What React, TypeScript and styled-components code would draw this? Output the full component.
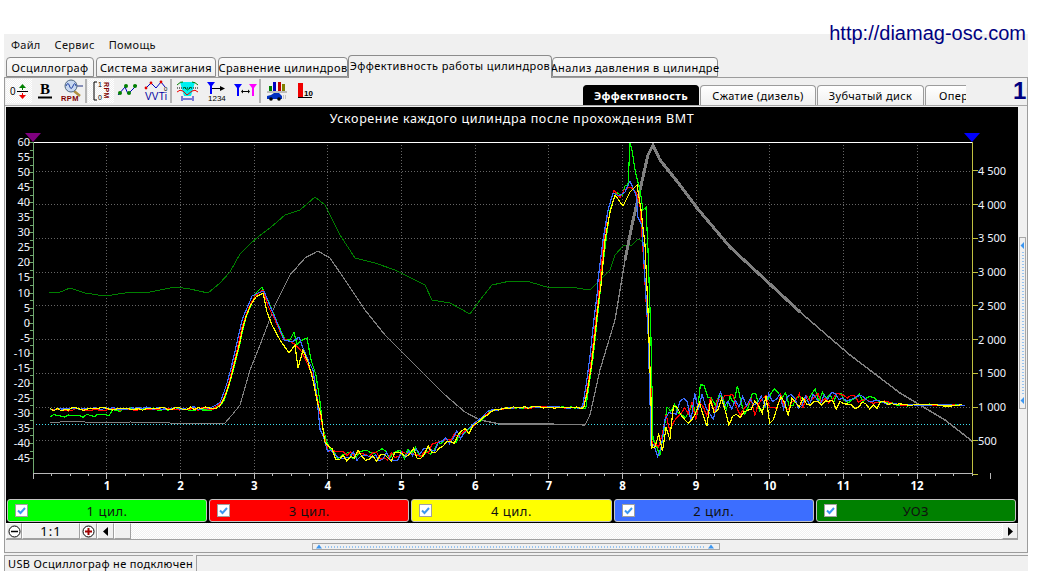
import styled, { createGlobalStyle } from "styled-components";

const GlobalStyle = createGlobalStyle`
  html, body {
    margin: 0;
    height: 576px;
    overflow: hidden;
    background: #fff;
    font-family: "Noto Sans", "Open Sans", sans-serif;
    font-size: 11px;
    color: #000;
  }
`;

const TopStrip = styled.div`
  height: 34px;
  width: 1026px;
  display: flex;
  justify-content: flex-end;
  align-items: flex-end;
`;

const SiteLink = styled.div`
  position: relative;
  z-index: 1;
  font-family: "Liberation Sans", sans-serif;
  font-size: 20px;
  line-height: 22px;
  margin-bottom: -10px;
  color: #000080;
`;

const AppWindow = styled.div`
  margin-left: 4px;
  width: 1024px;
  height: 537px;
  background: #f0f0f0;
  display: flex;
  flex-direction: column;
`;

const MenuBar = styled.div`
  height: 21px;
  display: flex;
  align-items: center;
  gap: 14px;
  padding-left: 7px;
  color: #111;
  letter-spacing: 0.3px;
`;

const TabRow = styled.div`
  height: 22px;
  display: flex;
  align-items: flex-end;
  padding-left: 2px;
  gap: 2px;
`;

const Tab = styled.div<{ $w: number; $active?: boolean }>`
  width: ${(p) => p.$w}px;
  height: ${(p) => (p.$active ? 23 : 20)}px;
  box-sizing: border-box;
  margin: ${(p) => (p.$active ? "0 -2px -1px" : "0")};
  position: relative;
  z-index: ${(p) => (p.$active ? 1 : 0)};
  border: 1px solid #8c8c8c;
  border-bottom: ${(p) => (p.$active ? "none" : "1px solid #8c8c8c")};
  border-radius: 4px 4px 0 0;
  background: ${(p) => (p.$active ? "#f0f0f0" : "linear-gradient(#fafafa, #f0f0f0)")};
  display: flex;
  align-items: center;
  justify-content: center;
  letter-spacing: 0.42px;
  white-space: nowrap;
  padding-bottom: ${(p) => (p.$active ? 3 : 0)}px;
`;

const Panel = styled.div`
  height: 476px;
  box-sizing: border-box;
  border: 1px solid #9c9c9c;
  display: flex;
  flex-direction: column;
`;

const Toolbar = styled.div`
  height: 28px;
  box-sizing: border-box;
  border-bottom: 1px solid #a8a8a8;
  display: flex;
  align-items: stretch;
  padding-left: 1px;
`;

const ToolGroup = styled.div<{ $w: number; $last?: boolean }>`
  width: ${(p) => p.$w}px;
  box-sizing: border-box;
  margin: 1px 0 2px;
  border-right: ${(p) => (p.$last ? "none" : "2px solid #b4b4b4")};
  display: flex;
  justify-content: space-around;
`;

const ToolButton = styled.div<{ $pressed?: boolean }>`
  width: 26px;
  display: flex;
  align-items: center;
  justify-content: center;
  background: ${(p) =>
    p.$pressed ? "repeating-conic-gradient(#fff 0 25%, #f0f0f0 0 50%) 0 0 / 2px 2px" : "none"};
`;

const SubTabs = styled.div`
  margin-left: auto;
  width: 383px;
  overflow: hidden;
  display: flex;
  align-items: flex-end;
  gap: 1px;
`;

const SubTab = styled.div<{ $w: number; $active?: boolean }>`
  flex: none;
  width: ${(p) => p.$w}px;
  height: 20px;
  box-sizing: border-box;
  border: 1px solid ${(p) => (p.$active ? "#000" : "#9c9c9c")};
  border-bottom: none;
  border-radius: 4px 4px 0 0;
  background: ${(p) => (p.$active ? "#000" : "linear-gradient(#fff, #f0f0f0)")};
  color: ${(p) => (p.$active ? "#fff" : "#000")};
  font-weight: ${(p) => (p.$active ? 700 : 400)};
  display: flex;
  align-items: center;
  justify-content: ${(p) => (p.$w < 100 && !p.$active ? "flex-start" : "center")};
  padding-left: ${(p) => (p.$w < 100 ? 13 : 0)}px;
  letter-spacing: 0.35px;
  white-space: nowrap;
`;

const BigNumber = styled.div`
  margin-left: 47px;
  width: 14px;
  overflow: hidden;
  font-family: "Liberation Sans", sans-serif;
  font-weight: 700;
  font-size: 24px;
  line-height: 26px;
  color: #000080;
`;

const ChartRow = styled.div`
  height: 434px;
  display: flex;
`;

const ChartColumn = styled.div`
  width: 1013px;
  padding-top: 1px;
  box-sizing: border-box;
  display: flex;
  flex-direction: column;
`;

const Scope = styled.div`
  margin-left: 1px;
  height: 416px;
  background: #000;
  display: flex;
  flex-direction: column;
`;

const ChartSvg = styled.svg`
  display: block;
  flex: none;
  font-family: "Noto Sans", sans-serif;
`;

const Legend = styled.div`
  width: 1009px;
  margin: 1px 0 0 1px;
  display: grid;
  grid-template-columns: repeat(5, 1fr);
  gap: 2px;
`;

const LegendButton = styled.div<{ $color: string }>`
  height: 23px;
  box-sizing: border-box;
  border: 1px solid #c4c4c4;
  border-radius: 3px;
  background: ${(p) => p.$color};
  display: flex;
  align-items: center;
  justify-content: center;
  position: relative;
  font-size: 13px;
  letter-spacing: 0.5px;
  color: #111;
`;

const CheckBox = styled.span`
  position: absolute;
  left: 7px;
  top: 4px;
  width: 13px;
  height: 13px;
  box-sizing: border-box;
  background: #fff;
  border: 1px solid #a0a0a0;
  display: flex;
  align-items: center;
  justify-content: center;
`;

const ScrollRow = styled.div`
  height: 17px;
  box-sizing: border-box;
  margin-left: 1px;
  border-bottom: 1px solid #a0a0a0;
  display: flex;
  background: repeating-conic-gradient(#fff 0 25%, #f0f0f0 0 50%) 0 0 / 2px 2px;
`;

const RaisedButton = styled.div<{ $w: number }>`
  flex: none;
  width: ${(p) => p.$w}px;
  box-sizing: border-box;
  background: #f0f0f0;
  border: 1px solid;
  border-color: #fff #a0a0a0 #a0a0a0 #fff;
  display: flex;
  align-items: center;
  justify-content: center;
  font-size: 13px;
  letter-spacing: 1px;
`;

const ScrollGap = styled.div`
  flex: 1;
`;

const VSplitter = styled.div`
  flex: 1;
  display: flex;
  align-items: center;
  padding-left: 1px;
`;

const VGrip = styled.div`
  width: 7px;
  height: 172px;
  border: 1px solid #a8a8a8;
  box-sizing: border-box;
`;

const HSplitter = styled.div`
  height: 12px;
  display: flex;
  align-items: center;
  justify-content: center;
`;

const HGrip = styled.div`
  width: 408px;
  height: 7px;
  border: 1px solid #a8a8a8;
  box-sizing: border-box;
`;

const StatusBar = styled.div`
  flex: 1;
  padding-top: 2px;
  display: flex;
  gap: 3px;
`;

const StatusCell = styled.div<{ $w?: number }>`
  ${(p) => (p.$w ? `width: ${p.$w}px;` : "flex: 1;")}
  box-sizing: border-box;
  border-top: 1px solid #a0a0a0;
  border-left: 1px solid #a0a0a0;
  padding-left: 3px;
  display: flex;
  align-items: center;
  letter-spacing: 0.35px;
`;

const toX = (t: number) => 33.3 + t * 73.65;

type Pt = [number, number];

const interp = (pts: Pt[], x: number) => {
  for (let i = 1; i < pts.length; i++) {
    if (x <= pts[i][0]) {
      const [x0, y0] = pts[i - 1];
      const [x1, y1] = pts[i];
      return y0 + ((y1 - y0) * (x - x0)) / (x1 - x0);
    }
  }
  return pts[pts.length - 1][1];
};

const basePts: Pt[] = [
  [50, 409], [215, 408], [222, 402], [228, 385], [237, 350], [243, 322], [250, 304], [255, 296],
  [318, 402], [322, 430], [327, 447], [337, 456], [400, 456], [420, 453], [440, 445], [465, 432],
  [480, 420], [490, 411], [510, 408], [540, 407], [584, 408], [590, 370], [600, 280],
  [652, 445], [658, 447], [664, 428], [672, 416], [690, 408], [760, 405], [800, 401], [850, 397],
  [880, 402], [900, 405], [965, 405],
];

const noiseAmp = (x: number) => {
  if (x < 215) return 1.6;
  if (x < 320) return 0.8;
  if (x < 470) return 5.5;
  if (x < 585) return 1;
  if (x < 655) return 2;
  if (x < 720) return 17;
  if (x < 830) return 17 - ((x - 720) / 110) * 10;
  if (x < 890) return 7 - ((x - 830) / 60) * 5;
  return 1;
};

const makeRand = (seed: number) => () => {
  seed = (seed * 16807) % 2147483647;
  return (seed % 10000) / 5000 - 1;
};

type Series = {
  color: string;
  seed: number;
  shift: number;
  bias: (x: number) => number;
  gain: number;
  peakA: Pt[];
  peakB: Pt[];
};

const seriesList: Series[] = [
  {
    color: "#00ff00",
    seed: 4711,
    shift: 1.5,
    gain: 1,
    bias: (x) => (x < 110 ? 7 : x < 215 ? 1 : x > 655 && x < 830 ? -6 : x > 340 && x < 420 ? -2 : 0),
    peakA: [[256, 293], [262, 287], [270, 305], [277, 322], [285, 340], [290, 340], [294, 332], [297, 345], [300, 341], [307, 338], [311, 360], [316, 375], [320, 402]],
    peakB: [[601, 280], [606, 240], [610, 210], [616, 192], [622, 196], [625, 186], [628, 185], [630, 143], [632, 150], [635, 170], [640, 190], [643, 210], [646, 207], [648, 250], [651, 340], [653, 440]],
  },
  {
    color: "#ff0000",
    seed: 9182,
    shift: 0.3,
    gain: 0.8,
    bias: (x) => (x < 215 ? 1 : 0),
    peakA: [[255, 296], [263, 290], [268, 306], [275, 320], [283, 338], [291, 342], [296, 345], [302, 352], [308, 365], [314, 378], [318, 402]],
    peakB: [[600, 280], [604, 240], [608, 210], [614, 190], [620, 198], [624, 190], [630, 187], [636, 192], [640, 205], [643, 250], [646, 300], [649, 345], [651, 390], [652, 446]],
  },
  {
    color: "#3c6eff",
    seed: 2203,
    shift: -1.5,
    gain: 0.9,
    bias: () => 0,
    peakA: [[252, 296], [258, 293], [264, 291], [270, 306], [276, 320], [284, 340], [292, 342], [299, 337], [303, 348], [309, 362], [313, 370], [317, 398]],
    peakB: [[598, 280], [603, 240], [608, 210], [613, 193], [619, 196], [625, 192], [630, 181], [636, 195], [638, 218], [642, 225], [645, 280], [648, 330], [650, 400], [651, 445]],
  },
  {
    color: "#ffff00",
    seed: 7741,
    shift: 1,
    gain: 1.1,
    bias: (x) => (x > 655 && x < 880 ? 6 : 0),
    peakA: [[256, 297], [263, 293], [267, 312], [272, 325], [280, 340], [289, 353], [295, 345], [298, 368], [303, 350], [308, 362], [313, 380], [318, 405]],
    peakB: [[601, 285], [605, 240], [610, 212], [615, 195], [623, 206], [630, 192], [637, 185], [641, 210], [645, 245], [648, 310], [651, 400], [652, 448]],
  },
];

const buildLine = (s: Series) => {
  const rand = makeRand(s.seed);
  const out: Pt[] = [];
  const run = (from: number, to: number) => {
    for (let x = from; x < to; x += 3.7) {
      const y = interp(basePts, x - s.shift) + s.bias(x) + rand() * noiseAmp(x) * s.gain;
      out.push([x, Math.min(y, 472)]);
    }
  };
  run(50, s.peakA[0][0]);
  out.push(...s.peakA);
  run(s.peakA[s.peakA.length - 1][0] + 3, s.peakB[0][0]);
  out.push(...s.peakB);
  run(s.peakB[s.peakB.length - 1][0] + 3, 965);
  return out.map((p) => p.join(",")).join(" ");
};

const timingLine =
  "49,292 58,293 70,288 85,293 105,296 125,293 150,292 175,287 190,289 208,293 220,283 230,272 240,254 250,244 258,237 270,228 285,215 300,210 315,197 325,205 340,235 355,258 375,263 395,270 425,285 432,300 450,303 470,314 480,300 492,285 510,281 530,282 550,288 570,287 590,290 600,280 610,270 615,255 623,246 632,245 638,239 645,243 648,245";
const rpmThin =
  "50,423 70,421 100,423 130,422 170,423 225,423 232,415 240,405 250,370 262,340 275,305";
const rpmMid =
  "275,305 290,275 305,258 318,251 330,258 345,280 365,310 385,335 405,355 425,375 445,395 465,412 480,420 500,424 550,424 585,425 590,415 600,370 615,320 625,260";
const rpmThick = "625,260 632,225 640,190 648,155 653,145 660,160 680,185 697,208 730,247 800,312";
const rpmTail = "800,312 850,355 900,393 945,420 972,441";

const leftLabels = Array.from({ length: 22 }, (_, i) => 60 - i * 5);
const rightLabels = ["4 500", "4 000", "3 500", "3 000", "2 500", "2 000", "1 500", "1 000", "500"];
const rightY = (i: number) => 171 + i * 33.72;

const Chart = () => (
  <ChartSvg width={1012} height={391} viewBox="6 107 1012 391">
    <text x={512} y={123} fill="#fff" fontSize={12.5} textAnchor="middle" letterSpacing={0.62}>
      Ускорение каждого цилиндра после прохождения ВМТ
    </text>
    {rightLabels.map((_, i) => (
      <line key={i} x1={33} x2={972} y1={rightY(i)} y2={rightY(i)} stroke="#666" strokeDasharray="1 2" shapeRendering="crispEdges" />
    ))}
    {Array.from({ length: 12 }, (_, i) => (
      <line key={i} x1={toX(i + 1)} x2={toX(i + 1)} y1={142} y2={473} stroke="#666" strokeDasharray="1 2" shapeRendering="crispEdges" />
    ))}
    <line x1={33} x2={972} y1={424} y2={424} stroke="#40e0f0" strokeDasharray="1 2" shapeRendering="crispEdges" />

    <polyline points={timingLine} fill="none" stroke="#008000" shapeRendering="crispEdges" />
    <polyline points={rpmThin} fill="none" stroke="#808080" shapeRendering="crispEdges" />
    <polyline points={rpmMid} fill="none" stroke="#808080" strokeWidth={1.2} shapeRendering="crispEdges" />
    <polyline points={rpmThick} fill="none" stroke="#808080" strokeWidth={3} shapeRendering="crispEdges" />
    <polyline points={rpmTail} fill="none" stroke="#808080" strokeWidth={1.5} shapeRendering="crispEdges" />
    {seriesList.map((s) => (
      <polyline key={s.color} points={buildLine(s)} fill="none" stroke={s.color} strokeWidth={1.2} shapeRendering="crispEdges" />
    ))}

    <line x1={33} x2={972} y1={142.5} y2={142.5} stroke="#fff" />
    <line x1={33.5} x2={33.5} y1={142} y2={473} stroke="#6fa86f" />
    <line x1={33} x2={972} y1={473.5} y2={473.5} stroke="#b8b8b8" />
    <line x1={972.5} x2={972.5} y1={142} y2={474} stroke="#c0c040" />

    {Array.from({ length: 43 }, (_, i) => (
      <line key={i} x1={i % 2 ? 30 : 28} x2={33} y1={142.5 + i * 7.525} y2={142.5 + i * 7.525} stroke="#6fa86f" shapeRendering="crispEdges" />
    ))}
    {Array.from({ length: 53 }, (_, i) => (
      <line key={i} x1={toX(i / 4)} x2={toX(i / 4)} y1={473} y2={i % 4 === 0 ? 479 : 476} stroke="#b8b8b8" shapeRendering="crispEdges" />
    ))}
    {Array.from({ length: 19 }, (_, i) => (
      <line key={i} x1={973} x2={i % 2 ? 976 : 978} y1={154.1 + i * 16.86 + (i % 2 ? 0 : 16.86)} y2={154.1 + i * 16.86 + (i % 2 ? 0 : 16.86)} stroke="#c0c040" shapeRendering="crispEdges" />
    ))}

    {leftLabels.map((v, i) => (
      <text key={v} x={30} y={146 + i * 15.05} fill="#f0f4ff" fontSize={11} textAnchor="end">
        {v}
      </text>
    ))}
    {rightLabels.map((v, i) => (
      <text key={v} x={978} y={rightY(i) + 4} fill="#f0f4ff" fontSize={11}>
        {v}
      </text>
    ))}
    {Array.from({ length: 12 }, (_, i) => (
      <text key={i} x={toX(i + 1)} y={490} fill="#fff" fontSize={11.5} fontWeight={700} textAnchor="middle">
        {i + 1}
      </text>
    ))}
    <polygon points="25,133 41,133 33,142" fill="#800080" />
    <polygon points="964,133 980,133 972,142" fill="#0000ff" />
  </ChartSvg>
);

const legendItems = [
  { label: "1 цил.", color: "#00ff00" },
  { label: "3 цил.", color: "#ff0000" },
  { label: "4 цил.", color: "#ffff00" },
  { label: "2 цил.", color: "#3c6eff" },
  { label: "УОЗ", color: "#008000" },
];

const CheckMark = () => (
  <svg width={11} height={11} viewBox="0 0 11 11">
    <path d="M2 5.5 L4.5 8 L9 3" fill="none" stroke="#3c96f0" strokeWidth={2} />
  </svg>
);

const Icon = ({ children }: { children: React.ReactNode }) => (
  <svg width={24} height={24} viewBox="0 0 24 24" fontFamily="Liberation Sans, sans-serif">
    {children}
  </svg>
);

const SmallT = ({ x, y, color }: { x: number; y: number; color: string }) => (
  <path d={`M${x - 4} ${y} H${x + 4} L${x + 1} ${y + 4} V${y + 12} H${x - 1} V${y + 4} Z`} fill={color} />
);

const ArrowsIcon = () => (
  <Icon>
    <text x={3} y={16} fontSize={10} fill="#000">0</text>
    <path d="M10 12.5H21" stroke="#000" />
    <path d="M15.5 5 L12 9 H19 Z M15 9h1v2h-1z" fill="#008000" />
    <path d="M15.5 20 L12 16 H19 Z M15 14h1v2h-1z" fill="#f00000" />
  </Icon>
);

const BoldIcon = () => (
  <Icon>
    <text x={12} y={15} fontSize={15} fontWeight={700} fontFamily="Liberation Serif, serif" textAnchor="middle">B</text>
    <path d="M5 18.5H19" stroke="#000" strokeWidth={2} />
  </Icon>
);

const RpmIcon = () => (
  <Icon>
    <path d="M14 12L20 17" stroke="#b09040" strokeWidth={2.5} />
    <path d="M16 7H23" stroke="#203080" />
    <circle cx={11} cy={7} r={6} fill="#c8d8f0" stroke="#506880" />
    <path d="M6 7 Q8 2 9.5 7 T13 7 T16 7" fill="none" stroke="#2040a0" />
    <text x={1} y={22} fontSize={7.5} fontWeight={700} fill="#800000" letterSpacing={0.4}>RPM</text>
  </Icon>
);

const ScaleIcon = () => (
  <Icon>
    <path d="M8 3H5V21H8" fill="none" stroke="#000" />
    <text x={9} y={8} fontSize={7} fill="#000">1</text>
    <text x={9} y={21} fontSize={7} fill="#000">0</text>
    <text transform="translate(15 3) rotate(90)" fontSize={7} fontWeight={700} fill="#800000" letterSpacing={0.4}>RPM</text>
  </Icon>
);

const LinkIcon = () => (
  <Icon>
    <path d="M2 16L9 8M12 15L19 8" stroke="#0000c0" />
    <path d="M9 8L12 15" stroke="#0000c0" />
    <path d="M19 8L21 6" stroke="#0000c0" />
    <circle cx={4} cy={14} r={2} fill="#008000" />
    <circle cx={10} cy={7} r={2} fill="#008000" />
    <circle cx={13} cy={14} r={2} fill="#008000" />
    <circle cx={19} cy={7} r={2} fill="#008000" />
  </Icon>
);

const VvtIcon = () => (
  <Icon>
    <path d="M2 9L7 4L12 9L17 3L21 8" fill="none" stroke="#0000c0" />
    <circle cx={2} cy={9} r={1.4} fill="#e00000" />
    <circle cx={7} cy={4} r={1.4} fill="#e00000" />
    <circle cx={17} cy={3} r={1.4} fill="#e00000" />
    <text x={20} y={12} fontSize={6} fill="#000">0</text>
    <text x={1} y={21} fontSize={10} fill="#0000a0" letterSpacing={0.2}>VVTi</text>
  </Icon>
);

const WindowIcon = () => (
  <Icon>
    <path d="M5 3H20L16 17H9Z" fill="#00f0f0" />
    <path d="M2 6Q6 2 8 3M17 3Q20 3 23 6" fill="none" stroke="#008000" />
    <path d="M9 8L12.5 11L16 8" fill="none" stroke="#008000" />
    <path d="M2 9H23" stroke="#000" strokeDasharray="1 1" />
    <path d="M2 13Q5 10 8 12L12 16L17 12Q20 10 23 13" fill="none" stroke="#f00000" />
    <path d="M7 17V22M18 17V22M8 20H17" stroke="#0000c0" />
  </Icon>
);

const OrderIcon = () => (
  <Icon>
    <SmallT x={7} y={3} color="#0000ff" />
    <path d="M8 9.5H20" stroke="#000" />
    <path d="M16 7L21 9.5L16 12Z" fill="#000" />
    <text x={4} y={22} fontSize={8} fill="#000">1234</text>
  </Icon>
);

const MarkersIcon = () => (
  <Icon>
    <SmallT x={5} y={5} color="#0000ff" />
    <SmallT x={20} y={5} color="#ff00ff" />
    <path d="M9 12.5H16" stroke="#000" />
    <path d="M10 10.5L8 12.5L10 14.5ZM15 10.5L17 12.5L15 14.5Z" fill="#000" />
  </Icon>
);

const CarIcon = () => (
  <Icon>
    <rect x={5} y={7} width={3} height={5} fill="#008000" />
    <rect x={9} y={3} width={3} height={9} fill="#0000c0" />
    <rect x={14} y={3} width={3} height={9} fill="#c00000" />
    <rect x={18} y={5} width={3} height={7} fill="#808000" />
    <path d="M3 13H23" stroke="#888" />
    <path d="M3 20V17L7 16L10 14H15L18 17V20Z" fill="#0030c0" />
    <circle cx={7} cy={20} r={1.8} fill="#000" />
    <circle cx={15} cy={20} r={1.8} fill="#000" />
    <path d="M19 17H23M19 19H23" stroke="#999" strokeDasharray="1 1" />
  </Icon>
);

const RedBarIcon = () => (
  <Icon>
    <rect x={5} y={4} width={5} height={14} fill="#f00000" />
    <path d="M5 18.5H19" stroke="#000" />
    <text x={11} y={17} fontSize={8} fontWeight={700} fill="#000">10</text>
    <path d="M10 10H19" stroke="#000" strokeDasharray="9 0" strokeOpacity={0} />
  </Icon>
);

const ZoomMinus = () => (
  <svg width={13} height={13} viewBox="0 0 13 13">
    <circle cx={6.5} cy={6.5} r={5.5} fill="#fff" stroke="#000" />
    <path d="M3 6.5H10" stroke="#000" strokeWidth={1.5} />
  </svg>
);

const ZoomPlus = () => (
  <svg width={13} height={13} viewBox="0 0 13 13">
    <circle cx={6.5} cy={6.5} r={5.5} fill="#fff" stroke="#000" />
    <path d="M3 6.5H10M6.5 3V10" stroke="#a00000" strokeWidth={2} />
  </svg>
);

const ArrowLeft = () => (
  <svg width={5} height={9} viewBox="0 0 5 9">
    <path d="M5 0V9L0 4.5Z" fill="#000" />
  </svg>
);

const ArrowRight = () => (
  <svg width={5} height={9} viewBox="0 0 5 9">
    <path d="M0 0V9L5 4.5Z" fill="#000" />
  </svg>
);

const VGripMark = () => (
  <svg width={5} height={170} viewBox="0 0 5 170" style={{ display: "block" }}>
    <path d="M4 4V11L0.5 7.5Z M4 159V166L0.5 162.5Z" fill="#3c96f0" />
    <path d="M3 14V157" stroke="#3c96f0" strokeDasharray="1 2" />
  </svg>
);

const HGripMark = () => (
  <svg width={406} height={5} viewBox="0 0 406 5" style={{ display: "block" }}>
    <path d="M3 4.5H9L6 0.5Z M395 4.5H401L398 0.5Z" fill="#3c96f0" />
    <path d="M12 3H392" stroke="#3c96f0" strokeDasharray="1 2" />
  </svg>
);

export default function App() {
  return (
    <>
      <GlobalStyle />
      <TopStrip>
        <SiteLink>http://diamag-osc.com</SiteLink>
      </TopStrip>
      <AppWindow>
        <MenuBar>
          <span>Файл</span>
          <span>Сервис</span>
          <span>Помощь</span>
        </MenuBar>
        <TabRow>
          <Tab $w={88}>Осциллограф</Tab>
          <Tab $w={120}>Система зажигания</Tab>
          <Tab $w={130}>Сравнение цилиндров</Tab>
          <Tab $w={204} $active>Эффективность работы цилиндров</Tab>
          <Tab $w={166}>Анализ давления в цилиндре</Tab>
        </TabRow>
        <Panel>
          <Toolbar>
            <ToolGroup $w={81}>
              <ToolButton $pressed><ArrowsIcon /></ToolButton>
              <ToolButton><BoldIcon /></ToolButton>
              <ToolButton><RpmIcon /></ToolButton>
            </ToolGroup>
            <ToolGroup $w={85}>
              <ToolButton $pressed><ScaleIcon /></ToolButton>
              <ToolButton><LinkIcon /></ToolButton>
              <ToolButton><VvtIcon /></ToolButton>
            </ToolGroup>
            <ToolGroup $w={89}>
              <ToolButton><WindowIcon /></ToolButton>
              <ToolButton><OrderIcon /></ToolButton>
              <ToolButton><MarkersIcon /></ToolButton>
            </ToolGroup>
            <ToolGroup $w={58} $last>
              <ToolButton><CarIcon /></ToolButton>
              <ToolButton><RedBarIcon /></ToolButton>
            </ToolGroup>
            <SubTabs>
              <SubTab $w={116} $active>Эффективность</SubTab>
              <SubTab $w={116}>Сжатие (дизель)</SubTab>
              <SubTab $w={107}>Зубчатый диск</SubTab>
              <SubTab $w={60}>Оперативная</SubTab>
            </SubTabs>
            <BigNumber>10</BigNumber>
          </Toolbar>
          <ChartRow>
            <ChartColumn>
              <Scope>
                <Chart />
                <Legend>
                  {legendItems.map((item) => (
                    <LegendButton key={item.label} $color={item.color}>
                      <CheckBox><CheckMark /></CheckBox>
                      {item.label}
                    </LegendButton>
                  ))}
                </Legend>
              </Scope>
              <ScrollRow>
                <RaisedButton $w={16}><ZoomMinus /></RaisedButton>
                <RaisedButton $w={58}>1:1</RaisedButton>
                <RaisedButton $w={17}><ZoomPlus /></RaisedButton>
                <RaisedButton $w={17}><ArrowLeft /></RaisedButton>
                <RaisedButton $w={17} />
                <ScrollGap />
                <RaisedButton $w={16}><ArrowRight /></RaisedButton>
              </ScrollRow>
            </ChartColumn>
            <VSplitter>
              <VGrip><VGripMark /></VGrip>
            </VSplitter>
          </ChartRow>
          <HSplitter>
            <HGrip><HGripMark /></HGrip>
          </HSplitter>
        </Panel>
        <StatusBar>
          <StatusCell $w={189}>USB Осциллограф не подключен</StatusCell>
          <StatusCell />
        </StatusBar>
      </AppWindow>
    </>
  );
}
